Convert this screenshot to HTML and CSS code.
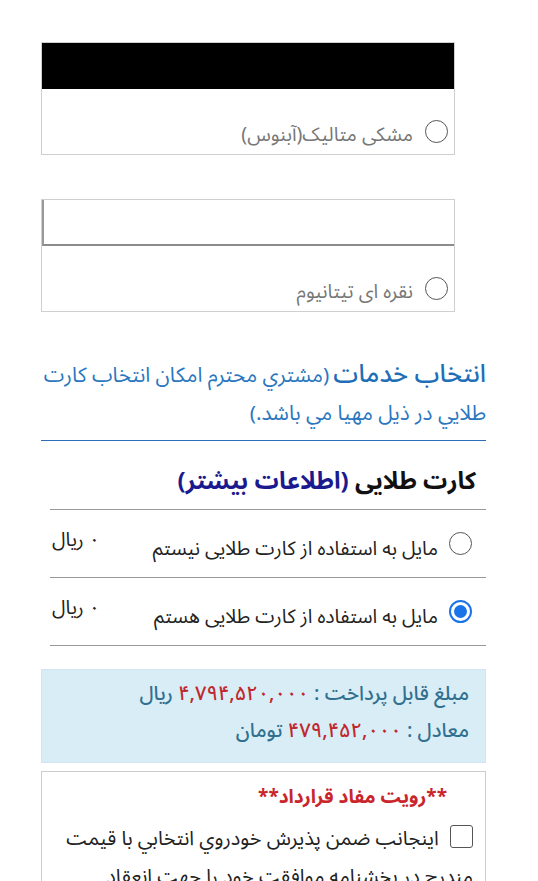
FILE: index.html
```html
<!DOCTYPE html>
<html lang="fa" dir="rtl">
<head>
<meta charset="utf-8">
<link rel="stylesheet" href="styles.css">
</head>
<body>
<div class="page">
  <div class="colors">
    <div class="color-box">
      <div class="swatch swatch-black"></div>
      <label class="color-opt"><span class="radio"></span><span class="color-name">مشکی متالیک(آبنوس)</span></label>
    </div>
    <div class="color-box">
      <div class="swatch swatch-white"></div>
      <label class="color-opt"><span class="radio"></span><span class="color-name">نقره ای تیتانیوم</span></label>
    </div>
  </div>

  <div class="services">
    <span class="svc-title">انتخاب خدمات</span> <span class="svc-note">(مشتري محترم امكان انتخاب كارت طلايي در ذيل مهيا مي باشد.)</span>
  </div>

  <div class="gold">
    <div class="gold-head">کارت طلایی <span class="more">(اطلاعات بیشتر)</span></div>
    <div class="gold-row">
      <span class="radio"></span>
      <span class="gold-text">مایل به استفاده از کارت طلایی نیستم</span>
      <span class="price">۰ ریال</span>
    </div>
    <div class="gold-row">
      <span class="radio checked"></span>
      <span class="gold-text">مایل به استفاده از کارت طلایی هستم</span>
      <span class="price">۰ ریال</span>
    </div>
  </div>

  <div class="alert">
    <div class="alert-line">مبلغ قابل پرداخت : <span class="num">۴,۷۹۴,۵۲۰,۰۰۰</span> ریال</div>
    <div class="alert-line">معادل : <span class="num">۴۷۹,۴۵۲,۰۰۰</span> تومان</div>
  </div>

  <div class="contract">
    <div class="contract-title">**رويت مفاد قرارداد**</div>
    <div class="contract-text"><span class="checkbox"></span> اینجانب ضمن پذيرش خودروي انتخابي با قيمت مندرج در بخشنامه موافقت خود را جهت انعقاد قرارداد اعلام مي نمايم.</div>
  </div>
</div>
</body>
</html>
```

FILE: styles.css
```css
* { box-sizing: border-box; }
html, body { margin: 0; padding: 0; background: #fff; }
body {
  font-family: "Noto Sans Arabic", "Vazirmatn", "DejaVu Sans", sans-serif;
  color: #222;
  direction: rtl;
}
.page {
  padding: 42px 52px 0 41px;
  overflow: hidden;
  height: 881px;
}
.colors {
  display: flex;
  flex-direction: column;
  gap: 44px;
  width: 414px;
  margin-left: auto;
  margin-right: 31px;
}
.color-box {
  border: 1px solid #cfcfcf;
  height: 113px;
  display: flex;
  flex-direction: column;
}
.swatch { height: 46px; flex: none; }
.swatch-black { background: #000; }
.swatch-white { background: #fff; border-left: 2px solid #9a9a9a; border-bottom: 2px solid #8c8c8c; }
.color-opt {
  flex: 1;
  display: flex;
  align-items: flex-end;
  gap: 12px;
  padding: 0 6px 11px 0;
}
.radio {
  width: 23px;
  height: 23px;
  border: 1.5px solid #555;
  border-radius: 50%;
  flex: none;
  display: inline-block;
  position: relative;
}
.radio.checked { border: 2px solid #1a73e8; }
.radio.checked::after {
  content: "";
  position: absolute;
  inset: 3px;
  background: #1a73e8;
  border-radius: 50%;
}
.color-name {
  color: #777;
  font-size: 19.5px;
  line-height: 26px;
  margin-bottom: -5px;
}
.services {
  margin-top: 44px;
  padding-bottom: 7px;
  border-bottom: 1px solid #2a6ebb;
  line-height: 36px;
  color: #2a77c0;
}
.svc-title { font-size: 25px; color: #1f6fb8; font-weight: 500; }
.svc-note { font-size: 20.8px; }
.gold { margin-top: 20px; }
.gold-head {
  font-size: 24px;
  font-weight: bold;
  color: #111;
  padding: 2px 10px 8px 0;
  margin-left: 9px;
  border-bottom: 1px solid #999;
  line-height: 38px;
}
.more { color: #1a1a8e; }
.gold-row {
  display: flex;
  align-items: center;
  height: 68px;
  margin-left: 9px;
  border-bottom: 1px solid #999;
  padding: 0 14px 0 0;
  gap: 11px;
}
.gold-text { font-size: 19.5px; color: #222; margin-top: 10px; }
.price { margin-right: auto; font-size: 19.5px; margin-left: 2px; margin-top: -8px; color: #222; }
.alert {
  margin-top: 23px;
  background: #d9edf7;
  border: 1px solid #cfe6f1;
  color: #31708f;
  padding: 6px 16px 12px;
  font-size: 20px;
  font-weight: 500;
  line-height: 37px;
  height: 94px;
}
.num { color: #c0282e; }
.contract {
  margin-top: 8px;
  border: 1px solid #ccc;
  padding: 8px 12px 0 12px;
  height: 200px;
}
.contract-title {
  color: #c9252b;
  font-weight: bold;
  font-size: 19px;
  line-height: 34px;
  padding-right: 26px;
}
.contract-text {
  font-size: 20px;
  line-height: 38px;
  color: #222;
  margin-top: 6px;
}
.checkbox {
  display: inline-block;
  width: 23px;
  height: 23px;
  border: 1.5px solid #555;
  border-radius: 3px;
  vertical-align: -3px;
  margin-left: 6px;
}
```
